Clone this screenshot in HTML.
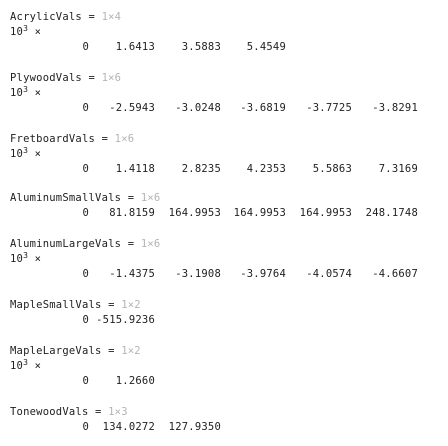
<!DOCTYPE html>
<html><head><meta charset="utf-8"><style>
html,body{margin:0;padding:0;background:#fff;width:448px;height:446px;overflow:hidden;position:relative}
div{position:absolute;font-family:"DejaVu Sans Mono","Liberation Mono",monospace;font-size:10.5px;letter-spacing:0.22px;line-height:15px;color:#212121;white-space:pre}
.h{left:10px}
.g{color:#b4b4b4}
sup{font-size:8px;line-height:0;vertical-align:4px}
</style></head><body>
<div class="h" style="top:10px">AcrylicVals = <span class="g">1×4</span></div>
<div class="h" style="top:25px">10<sup>3</sup> ×</div>
<div style="top:40px;right:359px">0</div><div style="top:40px;right:293px">1.6413</div><div style="top:40px;right:227px">3.5883</div><div style="top:40px;right:162px">5.4549</div>

<div class="h" style="top:71px">PlywoodVals = <span class="g">1×6</span></div>
<div class="h" style="top:86px">10<sup>3</sup> ×</div>
<div style="top:101px;right:359px">0</div><div style="top:101px;right:293px">-2.5943</div><div style="top:101px;right:227px">-3.0248</div><div style="top:101px;right:162px">-3.6819</div><div style="top:101px;right:96px">-3.7725</div><div style="top:101px;right:30px">-3.8291</div>

<div class="h" style="top:132px">FretboardVals = <span class="g">1×6</span></div>
<div class="h" style="top:147px">10<sup>3</sup> ×</div>
<div style="top:162px;right:359px">0</div><div style="top:162px;right:293px">1.4118</div><div style="top:162px;right:227px">2.8235</div><div style="top:162px;right:162px">4.2353</div><div style="top:162px;right:96px">5.5863</div><div style="top:162px;right:30px">7.3169</div>

<div class="h" style="top:191px">AluminumSmallVals = <span class="g">1×6</span></div>
<div style="top:206px;right:359px">0</div><div style="top:206px;right:293px">81.8159</div><div style="top:206px;right:227px">164.9953</div><div style="top:206px;right:162px">164.9953</div><div style="top:206px;right:96px">164.9953</div><div style="top:206px;right:30px">248.1748</div>

<div class="h" style="top:237px">AluminumLargeVals = <span class="g">1×6</span></div>
<div class="h" style="top:252px">10<sup>3</sup> ×</div>
<div style="top:267px;right:359px">0</div><div style="top:267px;right:293px">-1.4375</div><div style="top:267px;right:227px">-3.1908</div><div style="top:267px;right:162px">-3.9764</div><div style="top:267px;right:96px">-4.0574</div><div style="top:267px;right:30px">-4.6607</div>

<div class="h" style="top:298px">MapleSmallVals = <span class="g">1×2</span></div>
<div style="top:313px;right:359px">0</div><div style="top:313px;right:293px">-515.9236</div>

<div class="h" style="top:344px">MapleLargeVals = <span class="g">1×2</span></div>
<div class="h" style="top:359px">10<sup>3</sup> ×</div>
<div style="top:374px;right:359px">0</div><div style="top:374px;right:293px">1.2660</div>

<div class="h" style="top:405px">TonewoodVals = <span class="g">1×3</span></div>
<div style="top:420px;right:359px">0</div><div style="top:420px;right:293px">134.0272</div><div style="top:420px;right:227px">127.9350</div>
</body></html>
